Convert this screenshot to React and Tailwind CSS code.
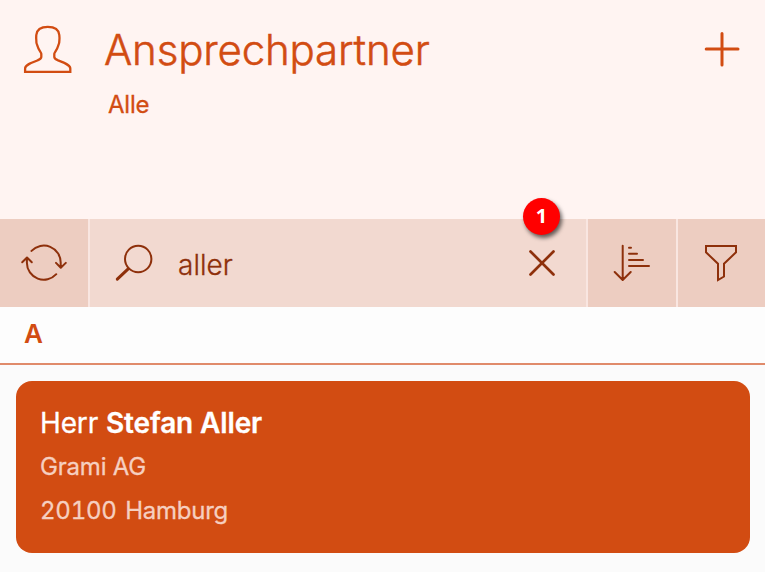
function Icon({ box, className, width = 2, children }) {
  return (
    <svg viewBox={box} className={className} fill="none" stroke="currentColor" strokeWidth={width} strokeLinecap="round" strokeLinejoin="round" aria-hidden="true">
      {children}
    </svg>
  );
}

function Header() {
  return (
    <header className="flex h-[219px] items-start bg-[#fff4f2] text-[#d24c12]">
      <Icon box="0 0 88 88" className="mt-[5px] size-[88px] shrink-0" width={2.3}>
        <path strokeLinejoin="miter" d="M25.1 66.8V63.5C25.1 60 30 58.2 37.5 55.4C40.2 54.3 41.3 53.6 41.3 52V48.8C41.3 47.4 38.7 45.5 37.6 41.2C36.4 38.6 36 37.2 36.3 35C36 33.5 36.1 32.8 36.3 30C36.8 25 41 21.9 47.8 21.9S58.8 25 59.3 30C59.6 32.8 59.6 33.5 59.4 35C59.6 37.2 59.2 38.6 58 41.2C56.9 45.5 54.3 47.4 54.3 48.8V52C54.3 53.6 55.4 54.3 58.1 55.4C65.6 58.2 70.3 60 70.3 63.5V66.8Z" />
      </Icon>
      <div className="grow pl-4 pt-6">
        <h1 className="text-[42px] leading-[52px] font-light tracking-[-0.17px] [-webkit-text-stroke:0.5px]">Ansprechpartner</h1>
        <p className="mt-[13px] pl-1 text-2xl leading-8 tracking-[-0.2px] [-webkit-text-stroke:0.3px]">Alle</p>
      </div>
      <Icon box="0 0 88 88" className="mt-[5px] size-[88px] shrink-0" width={3}>
        <path d="M45 28.5V60M29.2 44H61" />
      </Icon>
    </header>
  );
}

function Toolbar() {
  return (
    <div className="flex h-[88px] gap-0.5 bg-[#f9e6e1] text-[#8e300b]">
      <button className="w-[88px] shrink-0 bg-[#edcdc1]">
        <Icon box="0 0 88 88" className="size-[88px]" width={2}>
          <path d="M31.5 31.9A16.9 16.9 0 0 1 60.7 43.9V48.6M56 43.9L60.8 48.8L65.8 43.9" />
          <path d="M56.3 55.2A16.9 16.9 0 0 1 26.9 43.9V38.8M22.2 43.3L27 38.5L31.8 43.3" />
        </Icon>
      </button>
      <div className="relative flex grow items-center bg-[#f2d9d0]">
        <Icon box="0 0 88 88" className="size-[88px] shrink-0">
          <circle cx="48.2" cy="40" r="13.2" />
          <path strokeWidth="3" d="M38.2 49.8L27.3 60.2" />
        </Icon>
        <span className="grow pt-1 text-[28px] leading-9 font-light [-webkit-text-stroke:0.3px]">aller</span>
        <Icon box="0 0 88 88" className="size-[88px] shrink-0" width={2.7}>
          <path d="M32.5 32.5L55.5 55.5M55.5 32.5L32.5 55.5" />
        </Icon>
        <span className="absolute -top-[21px] left-[433px] flex size-[37px] items-center justify-center rounded-full bg-[#ff0000] pb-px font-['Open_Sans',sans-serif] text-[20px] font-bold text-white shadow-[2px_3px_4px_rgba(0,0,0,0.6)]">1</span>
      </div>
      <button className="w-[88px] shrink-0 bg-[#edcdc1]">
        <Icon box="0 0 88 88" className="size-[88px]" width={2}>
          <path d="M34.7 26.8V60.5M26.7 53L34.7 61L42.7 53M41 28.7H43M41 34.8H49M41 40.9H55M41 46.9H61" />
        </Icon>
      </button>
      <button className="w-[87px] shrink-0 bg-[#edcdc1]">
        <Icon box="0 0 87 88" className="h-[88px] w-[87px]">
          <path strokeLinejoin="miter" d="M28 27H58V33.3L46 44.8V57.5L40 61V44.8L28 33.3Z" />
        </Icon>
      </button>
    </div>
  );
}

export default function App() {
  return (
    <div className="h-[572px] w-[765px] overflow-hidden bg-[#fbfbfb] font-['Inter',sans-serif]">
      <Header />
      <Toolbar />
      <h2 className="h-[58px] border-b-2 border-[#e08b6b] bg-[#fdfdfd] pl-6 pt-[11px] text-[26px] leading-8 font-semibold text-[#d24c12]">A</h2>
      <article className="mt-4 mr-[15px] ml-4 h-[172px] rounded-2xl bg-[#d24c12] pl-6 pt-5 text-2xl leading-[44px] text-[#f6cfc0]">
        <p className="text-[28px] tracking-[-0.13px] text-white [-webkit-text-stroke:0.3px]">Herr <strong className="font-semibold">Stefan Aller</strong></p>
        <p className="tracking-[-0.2px] [-webkit-text-stroke:0.3px]">Grami AG</p>
        <p className="tabular-nums tracking-[-0.25px] [word-spacing:2.5px] [-webkit-text-stroke:0.3px]">20100 Hamburg</p>
      </article>
    </div>
  );
}
